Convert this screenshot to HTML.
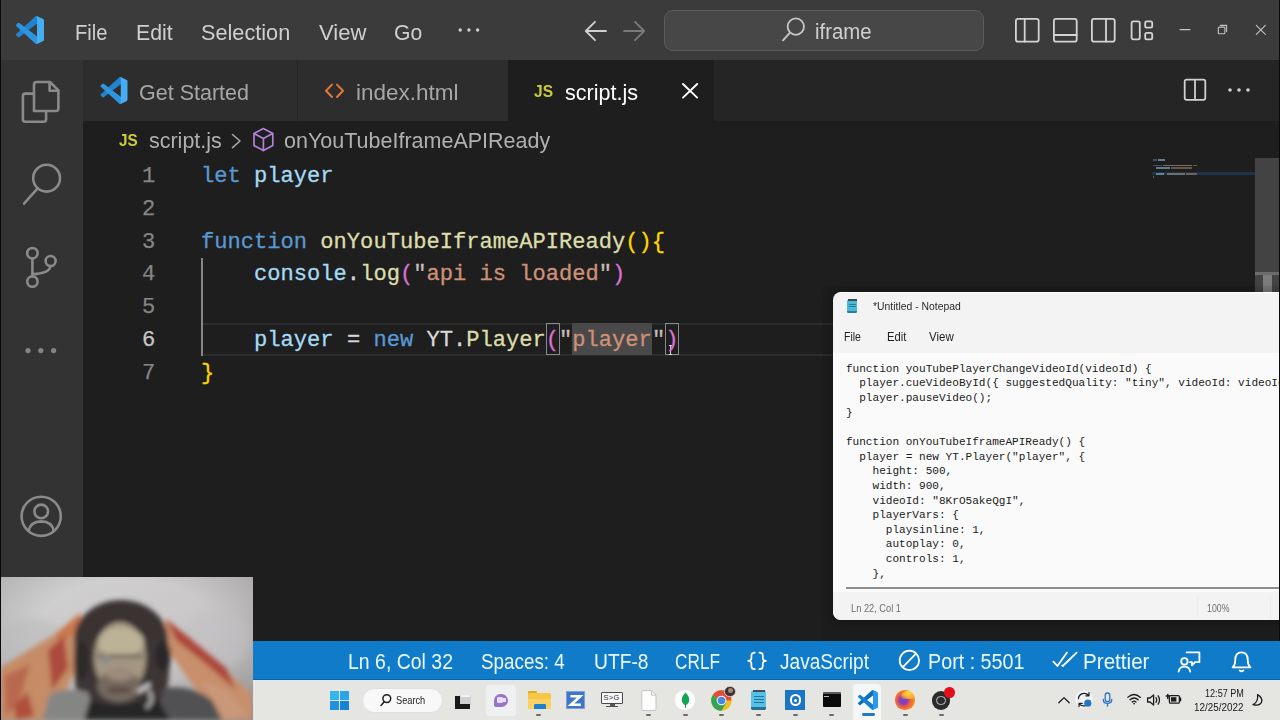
<!DOCTYPE html>
<html><head><meta charset="utf-8"><title>script.js</title>
<style>
*{margin:0;padding:0;box-sizing:border-box}
html,body{width:1280px;height:720px;overflow:hidden;background:#1e1e1e;font-family:"Liberation Sans",sans-serif}
body{position:relative}
.a{position:absolute}
.t{position:absolute;white-space:pre;line-height:1;display:block}
svg{position:absolute;overflow:visible}
/* chrome */
#titlebar{left:0;top:0;width:1280px;height:60px;background:#3b3b3b}
#activity{left:0;top:60px;width:83px;height:620px;background:#333333}
#leftedge{left:0;top:0;width:1.2px;height:720px;background:#0a0a0a;z-index:50}
#rightedge{left:1278.8px;top:0;width:1.2px;height:641px;background:#0a0a0a;z-index:50}
#tabbar{left:83px;top:60px;width:1197px;height:60.5px;background:#252526}
.tab{top:60px;height:60.5px;background:#2d2d2d}
#tabactive{left:508px;top:60px;width:206px;height:61px;background:#1e1e1e}
#searchbox{left:664px;top:9.5px;width:320px;height:41.5px;border-radius:9px;background:#474747;border:1.5px solid #5c5c5c}
/* editor */
.ln{margin-top:.6px;-webkit-text-stroke:.25px currentColor;position:absolute;left:128.8px;width:26.5px;text-align:right;font-family:"Liberation Mono",monospace;font-size:22.1px;line-height:1;color:#858585;letter-spacing:0px}
.cl{margin-top:.6px;-webkit-text-stroke:.3px currentColor;position:absolute;left:201px;white-space:pre;font-family:"Liberation Mono",monospace;font-size:22.1px;line-height:1;letter-spacing:0px;color:#d4d4d4}
.k{color:#5a98d2}.v{color:#a4daf6}.f{color:#dcdcaa}.s{color:#ce9178}.q{color:#c9bdb6}.b1{color:#ffd700}.b2{color:#da70d6}.w{color:#d8d8d8}
/* status + taskbar */
#status{left:253px;top:641px;width:1027px;height:38.5px;background:#107cc9;border-bottom:1.5px solid #0b64a6}
#taskbar{left:253px;top:679.5px;width:1027px;height:40.5px;background:#e5e5e2;border-top:1px solid #dfe7ee}
.ind{position:absolute;top:713.6px;width:5px;height:2.2px;border-radius:1px;background:#6b6b6b}
/* notepad */
#notepad{left:832.5px;top:292.2px;width:460px;height:328px;background:#f3f3f3;border-radius:8px;overflow:hidden;box-shadow:0 1px 8px 2px rgba(0,0,0,.22);border-top:1px solid #fff}
#npshadow{left:822px;top:286px;width:470px;height:355px;background:rgba(0,0,0,.06)}
#nptext{left:0;top:60px;width:460px;height:239px;background:#fafafa}
.nl{margin-top:.1px;position:absolute;left:13.4px;white-space:pre;font-family:"Liberation Mono",monospace;font-size:11.1px;line-height:1;color:#1b1b1b;letter-spacing:-0.01px}

</style></head>
<body>
<!-- ============ VS Code window chrome ============ -->
<div class="a" id="titlebar"></div>
<div class="a" id="tabbar"></div>
<div class="a tab" style="left:83px;width:213.5px"></div>
<div class="a tab" style="left:297.5px;width:210.5px"></div>
<div class="a" id="tabactive"></div>
<div class="a" id="activity"></div>
<div class="a" id="leftedge"></div>
<div class="a" id="rightedge"></div>
<div class="a" id="searchbox"></div>

<!-- VS Code logo (title bar) -->
<svg style="left:16.4px;top:16.4px" width="28" height="28" viewBox="0 0 100 100">
<path fill="#2283cf" d="M96.46 10.8 75.86.88a6.23 6.23 0 0 0-7.1 1.2L1.3 63.58a4.17 4.17 0 0 0 0 6.17l5.52 5a4.17 4.17 0 0 0 5.32.24L93.4 13.37c2.72-2.07 6.64-.13 6.64 3.3v-.24a6.25 6.25 0 0 0-3.54-5.63z"/>
<path fill="#2f94de" d="m96.46 89.2-20.6 9.92a6.23 6.23 0 0 1-7.1-1.21L1.3 36.42a4.17 4.17 0 0 1 0-6.17l5.52-5a4.17 4.17 0 0 1 5.32-.24L93.4 86.63c2.72 2.07 6.64.13 6.64-3.3v.24a6.25 6.25 0 0 1-3.54 5.63z"/>
<path fill="#46adf3" d="M75.86 99.13a6.23 6.23 0 0 1-7.1-1.21c2.3 2.3 6.25.67 6.25-2.59V4.67c0-3.26-3.94-4.89-6.25-2.59a6.23 6.23 0 0 1 7.1-1.21l20.6 9.9A6.25 6.25 0 0 1 100 16.41v67.18a6.25 6.25 0 0 1-3.54 5.63l-20.6 9.91z"/>
</svg>
<!-- VS Code logo (Get Started tab) -->
<svg style="left:99.5px;top:77px" width="28" height="27" viewBox="0 0 100 100">
<path fill="#2283cf" d="M96.46 10.8 75.86.88a6.23 6.23 0 0 0-7.1 1.2L1.3 63.58a4.17 4.17 0 0 0 0 6.17l5.52 5a4.17 4.17 0 0 0 5.32.24L93.4 13.37c2.72-2.07 6.64-.13 6.64 3.3v-.24a6.25 6.25 0 0 0-3.54-5.63z"/>
<path fill="#2f94de" d="m96.46 89.2-20.6 9.92a6.23 6.23 0 0 1-7.1-1.21L1.3 36.42a4.17 4.17 0 0 1 0-6.17l5.52-5a4.17 4.17 0 0 1 5.32-.24L93.4 86.63c2.72 2.07 6.64.13 6.64-3.3v.24a6.25 6.25 0 0 1-3.54 5.63z"/>
<path fill="#46adf3" d="M75.86 99.13a6.23 6.23 0 0 1-7.1-1.21c2.3 2.3 6.25.67 6.25-2.59V4.67c0-3.26-3.94-4.89-6.25-2.59a6.23 6.23 0 0 1 7.1-1.21l20.6 9.9A6.25 6.25 0 0 1 100 16.41v67.18a6.25 6.25 0 0 1-3.54 5.63l-20.6 9.91z"/>
</svg>

<!-- title bar: menu overflow dots, nav arrows, search icon, layout + window controls -->
<svg style="left:0;top:0" width="1280" height="60" viewBox="0 0 1280 60" fill="none" stroke-linecap="round" stroke-linejoin="round">
<g fill="#d0d0d0"><circle cx="460.2" cy="30" r="1.7"/><circle cx="468.9" cy="30" r="1.7"/><circle cx="477.6" cy="30" r="1.7"/></g>
<path d="M606 31H586M595 21.8 585.8 31 595 40.2" stroke="#d0d0d0" stroke-width="1.8"/>
<path d="M624 31H644M635 21.8 644.2 31 635 40.2" stroke="#7a7a7a" stroke-width="1.8"/>
<circle cx="795.8" cy="26.6" r="8.2" stroke="#c8c8c8" stroke-width="1.8"/><path d="M789.8 32.8 783 40.4" stroke="#c8c8c8" stroke-width="1.8"/>
<g stroke="#d4d4d4" stroke-width="1.8">
<rect x="1015.9" y="18.9" width="22.8" height="22.8" rx="2.2"/><path d="M1024.7 19V41.6"/>
<rect x="1053.9" y="18.9" width="22.8" height="22.8" rx="2.2"/><path d="M1054 35H1076.6"/>
<rect x="1091.9" y="18.9" width="22.8" height="22.8" rx="2.2"/><path d="M1106 19V41.6"/>
<rect x="1131.6" y="21.3" width="8.2" height="18" rx="1.8"/><rect x="1145.2" y="21.3" width="7" height="6.4" rx="1.6"/><rect x="1145.2" y="32.9" width="7" height="6.4" rx="1.6"/>
</g>
<g stroke="#c4c4c4" stroke-width="1.1">
<path d="M1180 29.6H1190"/>
<rect x="1218.3" y="27.1" width="6.6" height="6.6" rx="1"/><path d="M1220.4 25.4H1226.6V31.6"/>
<path d="M1256.3 25.3 1265.3 34.3M1265.3 25.3 1256.3 34.3"/>
</g>
</svg>

<!-- tab bar icons: <> html, close, split, more -->
<svg style="left:0;top:60px" width="1280" height="61" viewBox="0 60 1280 61" fill="none" stroke-linecap="round" stroke-linejoin="round">
<path d="M332 84.6 326 90.8 332 97M337 84.6 343 90.8 337 97" stroke="#e37933" stroke-width="2"/>
<path d="M683 84 697.2 97.6M697.2 84 683 97.6" stroke="#ffffff" stroke-width="1.9"/>
<g stroke="#d0d0d0" stroke-width="1.8"><rect x="1184.7" y="79.6" width="20.6" height="20.2" rx="2"/><path d="M1195 79.8V99.6"/></g>
<g fill="#d0d0d0"><circle cx="1230" cy="90" r="1.8"/><circle cx="1239" cy="90" r="1.8"/><circle cx="1248" cy="90" r="1.8"/></g>
</svg>

<!-- breadcrumb icons: chevron + symbol cube -->
<svg style="left:0;top:120px" width="600" height="38" viewBox="0 120 600 38" fill="none" stroke-linecap="round" stroke-linejoin="round">
<path d="M232.5 134.5 240 141 232.5 147.6" stroke="#a8a8a8" stroke-width="1.6"/>
<g stroke="#b180d7" stroke-width="1.7"><path d="M263.4 128.6 272.8 133.4V145.6L263.4 150.6 254 145.6V133.4Z"/><path d="M254.2 133.6 263.4 138.6 272.6 133.6M263.4 138.6V150.4"/></g>
</svg>

<!-- activity bar icons -->
<svg style="left:0;top:60px" width="83" height="520" viewBox="0 60 83 520" fill="none" stroke="#8a8a8a" stroke-width="2.6" stroke-linecap="round" stroke-linejoin="round">
<path d="M34 111V84.5Q34 82 36.5 82H50L58.4 90.4V108.5Q58.4 111 55.9 111Z"/><path d="M49.6 82.4V90.8H58"/>
<path d="M33.6 93.6H25.4Q22.9 93.6 22.9 96.1V119.3Q22.9 121.8 25.4 121.8H43.6Q46.1 121.8 46.1 119.3V111.4"/>
<circle cx="46.6" cy="178.2" r="13.4"/><path d="M37.4 188.6 24 203.6"/>
<circle cx="32.4" cy="253.2" r="5.2"/><circle cx="50.6" cy="261" r="5"/><circle cx="32.4" cy="281.6" r="5.2"/>
<path d="M32.4 258.6V276.2M50.4 266.2Q49.6 273.6 32.6 274.2"/>
<g fill="#858585" stroke="none"><circle cx="28" cy="350.6" r="2.6"/><circle cx="40.8" cy="350.6" r="2.6"/><circle cx="53.6" cy="350.6" r="2.6"/></g>
<circle cx="41.2" cy="516.3" r="19.6"/><circle cx="41.2" cy="511.4" r="6.8"/><path d="M28.6 531Q30.4 521.6 41.2 521.4 52 521.6 53.8 531"/>
</svg>

<!-- ============ editor ============ -->
<div class="a" style="left:203px;top:322.8px;width:1052px;height:32.9px;border-top:2px solid #2c2c2c;border-bottom:2px solid #2c2c2c"></div>
<div class="a" style="left:200.6px;top:257.5px;width:2px;height:98px;background:#868686"></div>
<div class="a" style="left:572px;top:323.4px;width:80px;height:32px;background:#494949"></div>
<div class="a" style="left:545.8px;top:322.8px;width:14px;height:32.6px;border:1.3px solid #8a8a8a"></div>
<div class="a" style="left:665.4px;top:322.8px;width:14px;height:32.6px;border:1.3px solid #8a8a8a"></div>
<div class="a" style="left:669.9px;top:345.4px;width:1.1px;height:9px;background:#d8d8d8"></div><div class="a" style="left:668.6px;top:345px;width:3.6px;height:1px;background:#d8d8d8"></div><div class="a" style="left:668.6px;top:353.8px;width:3.6px;height:1px;background:#d8d8d8"></div>
<div class="ln" style="top:165.56px;color:#858585">1</div>
<div class="ln" style="top:198.31px;color:#858585">2</div>
<div class="ln" style="top:231.06px;color:#858585">3</div>
<div class="ln" style="top:263.81px;color:#858585">4</div>
<div class="ln" style="top:296.56px;color:#858585">5</div>
<div class="ln" style="top:329.31px;color:#c6c6c6">6</div>
<div class="ln" style="top:362.06px;color:#858585">7</div>
<div class="cl" style="top:165.56px"><span class="k">let</span> <span class="v">player</span></div>
<div class="cl" style="top:231.06px"><span class="k">function</span> <span class="f">onYouTubeIframeAPIReady</span><span class="b1">(){</span></div>
<div class="cl" style="top:263.81px">    <span class="v">console</span><span class="w">.</span><span class="f">log</span><span class="b2">(</span><span class="q">"</span><span class="s">api is loaded</span><span class="q">"</span><span class="b2">)</span></div>
<div class="cl" style="top:329.31px">    <span class="v">player</span> <span class="w">=</span> <span class="k">new</span> <span class="w">YT.</span><span class="f">Player</span><span class="b2">(</span><span class="q">"</span><span class="s">player</span><span class="q">"</span><span class="b2">)</span></div>
<div class="cl" style="top:362.06px"><span class="b1">}</span></div>
<!-- minimap + scrollbar -->
<div class="a" style="left:1152px;top:172.2px;width:103px;height:3px;background:#1c3349"></div>
<div class="a" style="left:1152.5px;top:159.4px;width:4px;height:1.5px;opacity:.62;background:#4a7199"></div><div class="a" style="left:1158px;top:159.4px;width:6.5px;height:1.5px;opacity:.62;background:#8fb4c8"></div>
<div class="a" style="left:1152.5px;top:164.5px;width:9px;height:1.5px;opacity:.62;background:#4a7199"></div><div class="a" style="left:1163px;top:164.5px;width:29px;height:1.5px;opacity:.62;background:#a8a88a"></div><div class="a" style="left:1192.5px;top:164.5px;width:4.5px;height:1.5px;opacity:.62;background:#9a8a30"></div>
<div class="a" style="left:1156px;top:167.3px;width:14px;height:1.5px;opacity:.62;background:#8fb4c8"></div><div class="a" style="left:1171px;top:167.3px;width:21px;height:1.5px;opacity:.62;background:#9a7868"></div>
<div class="a" style="left:1156px;top:173px;width:8px;height:1.5px;opacity:.62;background:#8fb4c8"></div><div class="a" style="left:1167px;top:173px;width:18px;height:1.5px;opacity:.62;background:#9a9a8a"></div><div class="a" style="left:1186px;top:173px;width:11px;height:1.5px;opacity:.62;background:#a08070"></div>
<div class="a" style="left:1152.5px;top:176px;width:1.5px;height:1.5px;opacity:.62;background:#9a8a30"></div>
<div class="a" style="left:1255px;top:158px;width:25px;height:134px;background:#434343"></div>
<div class="a" style="left:1255px;top:272px;width:25px;height:2.5px;background:#6c6c6c"></div>
<div class="a" style="left:1263px;top:274.5px;width:8.5px;height:18px;background:#7c7c7c"></div>

<!-- ============ status bar ============ -->
<div class="a" id="status"></div>
<svg style="left:253px;top:641px" width="1027" height="39" viewBox="253 641 1027 39" fill="none" stroke="#ffffff" stroke-width="1.8" stroke-linecap="round" stroke-linejoin="round">
<path d="M754.8 652.6Q751.4 652.6 751.4 655.6V658.2Q751.4 660.8 748.2 660.9 751.4 661 751.4 663.6V666.2Q751.4 669.2 754.8 669.2M759.4 652.6Q762.8 652.6 762.8 655.6V658.2Q762.8 660.8 766 660.9 762.8 661 762.8 663.6V666.2Q762.8 669.2 759.4 669.2" stroke-width="1.7"/>
<circle cx="909.4" cy="660.4" r="9.7"/><path d="M902.8 667.2 916 653.6"/>
<path d="M1053.4 661.6 1057.4 666 1067 652.6M1062.2 665.6 1062.8 666 1076.6 652.6"/>
<path d="M1186.6 652.4H1199.4V662.2H1195L1192 665.4V662.2H1190"/><circle cx="1184.4" cy="661.4" r="3.2"/><path d="M1178.6 671.6Q1179.4 666.6 1184.4 666.6 1189.4 666.6 1190.2 671.6"/>
<path d="M1232.6 667.4H1250.4Q1247.8 665.2 1247.8 660.4 1247.8 652.4 1241.5 652.4 1235.2 652.4 1235.2 660.4 1235.2 665.2 1232.6 667.4ZM1239.6 670.4Q1241.5 672.2 1243.4 670.4"/>
</svg>

<!-- ============ notepad window ============ -->
<div class="a" id="npshadow"></div>
<div class="a" id="notepad">
<div class="a" id="nptext"></div>
<div class="a" style="left:13.5px;top:293.8px;width:440px;height:1.6px;background:#8c8c8c"></div>
<div class="a" style="left:0;top:299px;width:460px;height:29px;background:#f3f3f3"></div>
<div class="a" style="left:364px;top:303px;width:1px;height:22px;background:#ececec"></div>
<div class="a" style="left:437px;top:303px;width:1px;height:22px;background:#ececec"></div>
<!-- notepad app icon -->
<div class="a" style="left:14.6px;top:6.6px;width:10.4px;height:13.2px;background:#4bb8dc;border-radius:1.2px;border-bottom:2.6px solid #2b7d9c"></div>
<div class="a" style="left:15.4px;top:5.6px;width:8.8px;height:2px;background:#3a4a55"></div>
<div class="a" style="left:16.4px;top:10.6px;width:6.8px;height:1px;background:#2c7f9f"></div>
<div class="a" style="left:16.4px;top:13px;width:6.8px;height:1px;background:#2c7f9f"></div>
<div class="nl" style="top:70.49px">function youTubePlayerChangeVideoId(videoId) {</div>
<div class="nl" style="top:85.13px">  player.cueVideoById({ suggestedQuality: &quot;tiny&quot;, videoId: videoId });</div>
<div class="nl" style="top:99.77px">  player.pauseVideo();</div>
<div class="nl" style="top:114.41px">}</div>
<div class="nl" style="top:143.69px">function onYouTubeIframeAPIReady() {</div>
<div class="nl" style="top:158.33px">  player = new YT.Player(&quot;player&quot;, {</div>
<div class="nl" style="top:172.97px">    height: 500,</div>
<div class="nl" style="top:187.61px">    width: 900,</div>
<div class="nl" style="top:202.25px">    videoId: &quot;8KrO5akeQgI&quot;,</div>
<div class="nl" style="top:216.89px">    playerVars: {</div>
<div class="nl" style="top:231.53px">      playsinline: 1,</div>
<div class="nl" style="top:246.17px">      autoplay: 0,</div>
<div class="nl" style="top:260.81px">      controls: 1,</div>
<div class="nl" style="top:275.45px">    },</div>
</div>

<!-- ============ webcam overlay (abstract colour blocks) ============ -->
<div class="a" style="left:0;top:577px;width:253px;height:143px;background:#c9c7c8;overflow:hidden">
<svg style="left:0;top:0" width="253" height="143" viewBox="0 577 253 143">
<defs><filter id="bl" x="-20%" y="-20%" width="140%" height="140%"><feGaussianBlur stdDeviation="2.4"/></filter>
<filter id="bl2" x="-30%" y="-30%" width="160%" height="160%"><feGaussianBlur stdDeviation="5"/></filter>
<radialGradient id="vg" cx=".5" cy=".35" r=".75"><stop offset=".45" stop-color="#000" stop-opacity="0"/><stop offset="1" stop-color="#000" stop-opacity=".22"/></radialGradient>
<linearGradient id="wg" x1="0" y1="0" x2="1" y2="1"><stop offset="0" stop-color="#d3d2d3"/><stop offset=".55" stop-color="#c9c7c8"/><stop offset="1" stop-color="#bdbabb"/></linearGradient></defs>
<rect x="0" y="577" width="253" height="143" fill="url(#wg)"/>
<rect x="0" y="577" width="253" height="143" fill="url(#vg)"/>
<g filter="url(#bl2)"><ellipse cx="30" cy="640" rx="40" ry="22" fill="#bcbabc" opacity=".6"/><ellipse cx="215" cy="640" rx="34" ry="30" fill="#c2c0c2" opacity=".6"/></g>
<g filter="url(#bl)">
<path d="M80 613 58 632 0 668V720H46L66 690 84 650Z" fill="#c58c66"/>
<path d="M165 618 192 640 252 694V720H218L186 676 166 648Z" fill="#c78f6c"/>
<path d="M80 613 56 634 60 644 82 626Z" fill="#c9764e"/>
<path d="M48 650 64 636 68 668 52 690Z" fill="#ac4c3c"/>
<path d="M4 676 30 664 20 700 6 716Z" fill="#b9694e"/>
<path d="M14 706 28 692 34 716 16 720Z" fill="#b0503e"/>
<path d="M166 619 192 640 226 668 236 690 206 664 176 640Z" fill="#ad463a"/>
<path d="M200 680 226 690 248 716 226 720Z" fill="#c9987a"/>
<ellipse cx="121" cy="640" rx="47" ry="40" fill="#3a3333"/>
<path d="M75 640Q70 690 86 716L156 716Q174 690 168 640Z" fill="#3c3536"/>
<ellipse cx="120" cy="658" rx="26" ry="36" fill="#a39782"/>
<ellipse cx="121" cy="642" rx="23" ry="15" fill="#bcb297"/>
<ellipse cx="119" cy="686" rx="22" ry="16" fill="#75695f"/>
<ellipse cx="120" cy="674" rx="14" ry="7" fill="#9c8a7a"/>
<ellipse cx="163" cy="656" rx="8" ry="15" fill="#2a282c"/>
<ellipse cx="82" cy="660" rx="7" ry="20" fill="#2e2a2b"/>
<path d="M42 720 50 694Q66 686 88 692L96 720Z" fill="#858684"/>
<path d="M164 688Q192 684 212 700L222 720H156Z" fill="#515153"/>
<path d="M84 720 90 700Q120 712 156 696L170 720Z" fill="#262527"/>
<path d="M98 656H142" stroke="#6a6257" stroke-width="3.4"/>
<circle cx="106" cy="660" r="5" fill="#8f8d8a"/>
<path d="M108 690H130" stroke="#5a463f" stroke-width="5"/>
<path d="M138 692 150 684" stroke="#ececec" stroke-width="3"/>
<path d="M148 690Q156 700 146 708" stroke="#b8b8b8" stroke-width="3" fill="none"/>
</g>
</svg>
</div>

<!-- ============ Windows taskbar ============ -->
<div class="a" id="taskbar"></div>
<!-- windows logo -->
<div class="a" style="left:330.2px;top:690.8px;width:9.2px;height:9.2px;background:#35b4ee"></div>
<div class="a" style="left:340.2px;top:690.8px;width:9.2px;height:9.2px;background:#2aa6e8"></div>
<div class="a" style="left:330.2px;top:700.8px;width:9.2px;height:9.2px;background:#1f93e0"></div>
<div class="a" style="left:340.2px;top:700.8px;width:9.2px;height:9.2px;background:#1583d6"></div>
<!-- search pill -->
<div class="a" style="left:361.6px;top:688px;width:81.6px;height:24.6px;border-radius:12.3px;background:#f8f8f8;border:1px solid #e0e0e2"></div>
<svg style="left:378px;top:690px" width="16" height="20" viewBox="378 690 16 20" fill="none" stroke="#1c1c1c" stroke-width="1.5" stroke-linecap="round"><circle cx="386.8" cy="698.6" r="3.9"/><path d="M384.2 701.8 381 705.4"/></svg>
<!-- task view -->
<div class="a" style="left:458.6px;top:695.4px;width:12px;height:9.6px;background:#cfcfcf;border-radius:1px"></div>
<div class="a" style="left:455px;top:695.6px;width:5px;height:13.2px;background:#1a1a1a"></div>
<div class="a" style="left:455px;top:704.4px;width:15.4px;height:4.4px;background:#1a1a1a"></div>
<div class="a" style="left:461px;top:694.6px;width:9.4px;height:2.2px;background:#f4f4f4"></div>
<!-- chat -->
<div class="a" style="left:486px;top:685px;width:30px;height:31px;border-radius:4px;background:#eef0f2"></div>
<div class="a" style="left:494px;top:693.6px;width:14.2px;height:13.2px;border-radius:6.6px 6.6px 6.6px 2px;background:#9a72c8"></div>
<div class="a" style="left:497.4px;top:697.2px;width:6px;height:5.4px;border-radius:1.2px;background:#e8dcf6"></div>
<div class="a" style="left:503.4px;top:698px;width:2.8px;height:3.8px;background:#e8dcf6"></div>
<!-- explorer folder -->
<div class="a" style="left:528.4px;top:691px;width:9px;height:4px;border-radius:1.2px 1.2px 0 0;background:#e2a821"></div>
<div class="a" style="left:528.4px;top:693.4px;width:22.6px;height:16px;border-radius:1.6px;background:#f6c744"></div>
<div class="a" style="left:528.4px;top:699px;width:22.6px;height:10.4px;border-radius:0 0 1.6px 1.6px;background:#f9d262"></div>
<div class="a" style="left:533.6px;top:704.2px;width:12.4px;height:5.2px;border-radius:1.2px 1.2px 0 0;background:#1f7fd2"></div>
<!-- Z app -->
<div class="a" style="left:565.6px;top:691px;width:19.4px;height:18.4px;background:#3f77c8;border:1.6px solid #7f9fd2"></div>
<svg style="left:568px;top:693px" width="15" height="15" viewBox="0 0 15 15" fill="none" stroke="#fff" stroke-width="2.6" stroke-linejoin="miter"><path d="M2.4 3.2H12.2L3 11.8H12.8"/></svg>
<!-- S>G monitor -->
<div class="a" style="left:601.4px;top:692.2px;width:21.4px;height:11.4px;background:#f6f6f6;border:1.3px solid #4a4a4a;border-radius:1px"></div>
<div class="a" style="left:609.6px;top:703.6px;width:5px;height:2.2px;background:#555"></div>
<div class="a" style="left:606.4px;top:705.6px;width:11.4px;height:1.5px;background:#555"></div>
<span class="t" style="left:603.6px;top:694px;font-size:7.4px;color:#333;letter-spacing:.3px">S&gt;G</span>
<!-- blank file -->
<svg style="left:641px;top:689.6px" width="16" height="21" viewBox="0 0 16 21"><path d="M.8 1.6Q.8 .6 1.8.6H10.4L15 5.2V19.4Q15 20.4 14 20.4H1.8Q.8 20.4.8 19.4Z" fill="#fdfdfd" stroke="#c4c4c4" stroke-width="1"/><path d="M10.4.8V5.2H14.8" fill="none" stroke="#c4c4c4" stroke-width="1"/></svg>
<!-- mongodb -->
<div class="a" style="left:675.4px;top:690.2px;width:19.4px;height:19.4px;border-radius:50%;background:#fdfdfd"></div>
<svg style="left:680.6px;top:692.4px" width="9" height="16" viewBox="0 0 9 16"><path d="M4.5 .4Q8.4 4.2 8.2 8.2 7.9 11.8 4.5 13.4 1.1 11.8.8 8.2.6 4.2 4.5.4Z" fill="#14a551"/><path d="M4.5 12V15.6" stroke="#2a7a4a" stroke-width="1"/></svg>
<!-- chrome -->
<svg style="left:711px;top:690px" width="21" height="21" viewBox="0 0 20 20"><circle cx="10" cy="10" r="9.8" fill="#f0c020"/><path d="M10 10 1.5 5.1A9.8 9.8 0 0 1 18.5 5.1Z" fill="#e24a3b"/><path d="M10 10 1.5 5.1A9.8 9.8 0 0 0 10 19.8L14.6 12Z" fill="#34a354"/><path d="M10 10H19.2A9.8 9.8 0 0 0 18.5 5.1H10Z" fill="#e24a3b"/><circle cx="10" cy="10" r="4.6" fill="#f4f4f4"/><circle cx="10" cy="10" r="3.6" fill="#4a86e8"/></svg>
<div class="a" style="left:724.4px;top:685.6px;width:11.4px;height:11.4px;border-radius:50%;background:#3a2f2c;border:.8px solid #d8d0c8"></div>
<div class="a" style="left:727.6px;top:688.4px;width:5px;height:5px;border-radius:50%;background:#a08874"></div>
<!-- notepad app -->
<div class="a" style="left:751.4px;top:691.2px;width:14.8px;height:18.4px;background:#55c1e6;border-radius:1.4px;border-bottom:3.4px solid #2a6f90"></div>
<div class="a" style="left:752.6px;top:689.6px;width:12.4px;height:2.6px;background:#3f4e5a"></div>
<div class="a" style="left:754px;top:695.6px;width:9.6px;height:1.3px;background:#24769a"></div>
<div class="a" style="left:754px;top:698.8px;width:9.6px;height:1.3px;background:#24769a"></div>
<div class="a" style="left:754px;top:702px;width:9.6px;height:1.3px;background:#24769a"></div>
<!-- blue dial app -->
<div class="a" style="left:785px;top:690px;width:20.4px;height:19.8px;background:#1b76c6"></div>
<div class="a" style="left:789.6px;top:694.4px;width:11.2px;height:11.2px;border-radius:50%;border:2.4px solid #fff"></div>
<div class="a" style="left:794px;top:698.6px;width:3px;height:3px;border-radius:50%;background:#fff"></div>
<!-- terminal -->
<div class="a" style="left:822.6px;top:692.4px;width:18px;height:14.2px;background:#0c0c0c;border-radius:.8px;border-top:2.2px solid #5a5a5a"></div>
<div class="a" style="left:824.4px;top:696.4px;width:5px;height:1px;background:#bbb"></div>
<!-- vscode (active) -->
<div class="a" style="left:852.6px;top:683.6px;width:28.6px;height:36.4px;border-radius:4px 4px 0 0;background:#f5f6f7"></div>
<svg style="left:858px;top:689.8px" width="20" height="20" viewBox="0 0 100 100">
<path fill="#0b6fb8" d="M96.46 10.8 75.86.88a6.23 6.23 0 0 0-7.1 1.2L1.3 63.58a4.17 4.17 0 0 0 0 6.17l5.52 5a4.17 4.17 0 0 0 5.32.24L93.4 13.37c2.72-2.07 6.64-.13 6.64 3.3v-.24a6.25 6.25 0 0 0-3.54-5.63z"/>
<path fill="#1580cc" d="m96.46 89.2-20.6 9.92a6.23 6.23 0 0 1-7.1-1.21L1.3 36.42a4.17 4.17 0 0 1 0-6.17l5.52-5a4.17 4.17 0 0 1 5.32-.24L93.4 86.63c2.72 2.07 6.64.13 6.64-3.3v.24a6.25 6.25 0 0 1-3.54 5.63z"/>
<path fill="#2a9be8" d="M75.86 99.13a6.23 6.23 0 0 1-7.1-1.21c2.3 2.3 6.25.67 6.25-2.59V4.67c0-3.26-3.94-4.89-6.25-2.59a6.23 6.23 0 0 1 7.1-1.21l20.6 9.9A6.25 6.25 0 0 1 100 16.41v67.18a6.25 6.25 0 0 1-3.54 5.63l-20.6 9.91z"/>
</svg>
<div class="a" style="left:862px;top:713.4px;width:13px;height:2.8px;border-radius:1.4px;background:#1f78c8"></div>
<!-- firefox -->
<div class="a" style="left:895.4px;top:690.2px;width:19.4px;height:19.4px;border-radius:50%;background:radial-gradient(circle at 42% 52%,#7a3fc0 0,#8a3fb8 24%,#f0603a 44%,#f98a25 70%,#fbb030 100%)"></div>
<div class="a" style="left:901px;top:690.6px;width:13px;height:8px;border-radius:8px 8px 3px 3px;background:radial-gradient(ellipse at 60% 20%,#ffd83a 0,rgba(252,190,50,.85) 55%,rgba(250,150,40,0) 100%)"></div>
<!-- obs -->
<div class="a" style="left:932px;top:691.4px;width:18.2px;height:18.2px;border-radius:50%;background:#2b2a2c"></div>
<div class="a" style="left:936.4px;top:695.8px;width:9.4px;height:9.4px;border-radius:50%;border:1.4px solid #c8c8c8"></div>
<div class="a" style="left:944.4px;top:687.2px;width:10.4px;height:10.4px;border-radius:50%;background:#e3101c"></div>
<!-- tray -->
<svg style="left:1050px;top:686px" width="220" height="28" viewBox="1050 686 220 28" fill="none" stroke="#1c1c1c" stroke-width="1.3" stroke-linecap="round" stroke-linejoin="round">
<path d="M1058.8 702.8 1064 697.6 1069.2 702.8"/>
<circle cx="1084" cy="699.6" r="9" fill="#f1f3f5" stroke="none"/>
<path d="M1078.4 698.6A5.8 5.8 0 0 1 1088.6 695.4M1089 692.6V695.8H1085.8M1089.6 700.6A5.8 5.8 0 0 1 1079.4 703.8M1079 706.6V703.4H1082.2" stroke-width="1.2"/>
<circle cx="1087.8" cy="703.2" r="3.6" fill="#2476c4" stroke="none"/>
<g stroke="#2f74c0"><rect x="1105.2" y="693" width="4.6" height="8.6" rx="2.3"/><path d="M1103.2 699.4Q1103.4 703.4 1107.5 703.4 1111.6 703.4 1111.8 699.4M1107.5 703.6V706"/></g>
<path d="M1127.8 697.4Q1134 691.6 1140.4 697.4M1130 699.8Q1134 696.2 1138.2 699.8M1132.2 702Q1134 700.4 1136 702"/><circle cx="1134.1" cy="703.6" r=".9" fill="#1c1c1c" stroke="none"/>
<path d="M1147.6 698H1150L1153.6 695V705L1150 702H1147.6ZM1156 697.6Q1157.6 700 1156 702.4M1158.2 695.8Q1160.8 700 1158.2 704.2"/>
<rect x="1169.4" y="695.6" width="10" height="7.6" rx="1.2"/><path d="M1180.6 698V700.8"/><rect x="1171" y="697.2" width="5.4" height="4.4" fill="#1c1c1c" stroke="none"/><path d="M1167.8 694.4V698.4M1166.2 696H1169.4" stroke-width="1.5"/>
<path d="M1257.6 694.6Q1262.8 697.6 1261.6 702 1259.6 706.4 1253 704.6 1258.4 702 1257.6 694.6Z"/>
</svg>
<div class="ind" style="left:535.5px"></div>
<div class="ind" style="left:646.3px"></div>
<div class="ind" style="left:682.5px"></div>
<div class="ind" style="left:719.0px"></div>
<div class="ind" style="left:756.3px"></div>
<div class="ind" style="left:792.5px"></div>
<div class="ind" style="left:829.1px"></div>
<div class="ind" style="left:902.5px"></div>
<div class="ind" style="left:938.5px"></div>


<!-- fitted text labels -->
<span id="t0" class="t" style="left:75.00px;top:22.50px;font-size:21.50px;color:#cfcfcf;font-family:'Liberation Sans', sans-serif;font-weight:400;transform-origin:0 50%;transform:scaleX(0.9378);">File</span>
<span id="t1" class="t" style="left:136.25px;top:22.50px;font-size:21.50px;color:#cfcfcf;font-family:'Liberation Sans', sans-serif;font-weight:400;transform-origin:0 50%;transform:scaleX(0.9916);">Edit</span>
<span id="t2" class="t" style="left:201.25px;top:22.50px;font-size:21.50px;color:#cfcfcf;font-family:'Liberation Sans', sans-serif;font-weight:400;transform-origin:0 50%;transform:scaleX(1.0090);">Selection</span>
<span id="t3" class="t" style="left:318.75px;top:22.50px;font-size:21.50px;color:#cfcfcf;font-family:'Liberation Sans', sans-serif;font-weight:400;transform-origin:0 50%;transform:scaleX(1.0277);">View</span>
<span id="t4" class="t" style="left:393.75px;top:22.50px;font-size:21.50px;color:#cfcfcf;font-family:'Liberation Sans', sans-serif;font-weight:400;transform-origin:0 50%;transform:scaleX(0.9847);">Go</span>
<span id="t5" class="t" style="left:814.50px;top:21.75px;font-size:21.50px;color:#d0d0d0;font-family:'Liberation Sans', sans-serif;font-weight:400;transform-origin:0 50%;transform:scaleX(0.9459);">iframe</span>
<span id="t6" class="t" style="left:138.75px;top:82.50px;font-size:21.50px;color:#a6a6a6;font-family:'Liberation Sans', sans-serif;font-weight:400;transform-origin:0 50%;transform:scaleX(1.0004);">Get Started</span>
<span id="t7" class="t" style="left:355.50px;top:83.00px;font-size:21.50px;color:#a6a6a6;font-family:'Liberation Sans', sans-serif;font-weight:400;transform-origin:0 50%;transform:scaleX(1.0459);">index.html</span>
<span id="t8" class="t" style="left:564.50px;top:83.00px;font-size:21.50px;color:#ffffff;font-family:'Liberation Sans', sans-serif;font-weight:400;transform-origin:0 50%;transform:scaleX(1.0017);">script.js</span>
<span id="t9" class="t" style="left:533.50px;top:83.07px;font-size:17.40px;color:#cbcb41;font-family:'Liberation Sans', sans-serif;font-weight:700;transform-origin:0 50%;transform:scaleX(0.8928);">JS</span>
<span id="t10" class="t" style="left:118.50px;top:131.87px;font-size:17.40px;color:#cbcb41;font-family:'Liberation Sans', sans-serif;font-weight:700;transform-origin:0 50%;transform:scaleX(0.8787);">JS</span>
<span id="t11" class="t" style="left:149.25px;top:131.00px;font-size:21.50px;color:#b0b0b0;font-family:'Liberation Sans', sans-serif;font-weight:400;transform-origin:0 50%;transform:scaleX(0.9983);">script.js</span>
<span id="t12" class="t" style="left:283.75px;top:131.00px;font-size:21.50px;color:#b0b0b0;font-family:'Liberation Sans', sans-serif;font-weight:400;transform-origin:0 50%;transform:scaleX(1.0004);">onYouTubeIframeAPIReady</span>
<span id="t13" class="t" style="left:347.50px;top:651.72px;font-size:21.30px;color:#eaf8ff;font-family:'Liberation Sans', sans-serif;font-weight:400;transform-origin:0 50%;transform:scaleX(0.9142);">Ln 6, Col 32</span>
<span id="t14" class="t" style="left:481.25px;top:651.72px;font-size:21.30px;color:#eaf8ff;font-family:'Liberation Sans', sans-serif;font-weight:400;transform-origin:0 50%;transform:scaleX(0.8842);">Spaces: 4</span>
<span id="t15" class="t" style="left:593.50px;top:651.72px;font-size:21.30px;color:#eaf8ff;font-family:'Liberation Sans', sans-serif;font-weight:400;transform-origin:0 50%;transform:scaleX(0.9032);">UTF-8</span>
<span id="t16" class="t" style="left:675.00px;top:651.72px;font-size:21.30px;color:#eaf8ff;font-family:'Liberation Sans', sans-serif;font-weight:400;transform-origin:0 50%;transform:scaleX(0.8090);">CRLF</span>
<span id="t17" class="t" style="left:780.00px;top:651.72px;font-size:21.30px;color:#eaf8ff;font-family:'Liberation Sans', sans-serif;font-weight:400;transform-origin:0 50%;transform:scaleX(0.8950);">JavaScript</span>
<span id="t18" class="t" style="left:927.50px;top:651.72px;font-size:21.30px;color:#eaf8ff;font-family:'Liberation Sans', sans-serif;font-weight:400;transform-origin:0 50%;transform:scaleX(0.9262);">Port : 5501</span>
<span id="t19" class="t" style="left:1082.50px;top:651.72px;font-size:21.30px;color:#eaf8ff;font-family:'Liberation Sans', sans-serif;font-weight:400;transform-origin:0 50%;transform:scaleX(0.9686);">Prettier</span>
<span id="t20" class="t" style="left:396.25px;top:694.77px;font-size:11.50px;color:#1c1c1c;font-family:'Liberation Sans', sans-serif;font-weight:400;transform-origin:0 50%;transform:scaleX(0.8027);">Search</span>
<span id="t21" class="t" style="left:1204.60px;top:688.38px;font-size:10.60px;color:#1a1a1a;font-family:'Liberation Sans', sans-serif;font-weight:400;transform-origin:0 50%;transform:scaleX(0.8576);">12:57 PM</span>
<span id="t22" class="t" style="left:1194.00px;top:701.53px;font-size:10.60px;color:#1a1a1a;font-family:'Liberation Sans', sans-serif;font-weight:400;transform-origin:0 50%;transform:scaleX(0.9334);">12/25/2022</span>
<span id="t23" class="t" style="left:872.50px;top:301.21px;font-size:10.80px;color:#2a2a2a;font-family:'Liberation Sans', sans-serif;font-weight:400;transform-origin:0 50%;transform:scaleX(0.9618);">*Untitled - Notepad</span>
<span id="t24" class="t" style="left:844.40px;top:331.19px;font-size:12.00px;color:#1f1f1f;font-family:'Liberation Sans', sans-serif;font-weight:400;transform-origin:0 50%;transform:scaleX(0.8711);">File</span>
<span id="t25" class="t" style="left:886.60px;top:331.19px;font-size:12.00px;color:#1f1f1f;font-family:'Liberation Sans', sans-serif;font-weight:400;transform-origin:0 50%;transform:scaleX(0.9378);">Edit</span>
<span id="t26" class="t" style="left:928.75px;top:331.19px;font-size:12.00px;color:#1f1f1f;font-family:'Liberation Sans', sans-serif;font-weight:400;transform-origin:0 50%;transform:scaleX(0.9594);">View</span>
<span id="t27" class="t" style="left:851.00px;top:603.11px;font-size:10.80px;color:#6e6e6e;font-family:'Liberation Sans', sans-serif;font-weight:400;transform-origin:0 50%;transform:scaleX(0.8586);">Ln 22, Col 1</span>
<span id="t28" class="t" style="left:1206.90px;top:602.91px;font-size:10.80px;color:#6e6e6e;font-family:'Liberation Sans', sans-serif;font-weight:400;transform-origin:0 50%;transform:scaleX(0.8145);">100%</span>
</body></html>
